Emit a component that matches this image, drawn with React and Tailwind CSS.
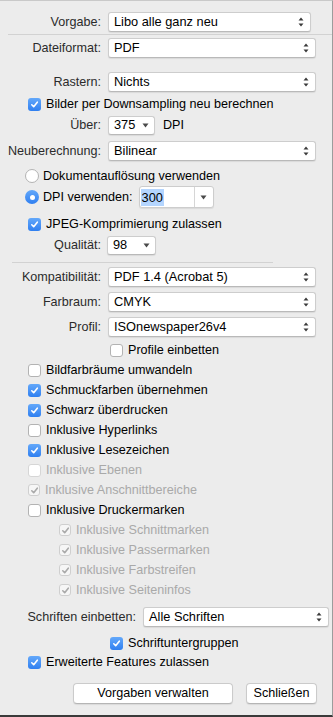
import React from "react";

const font = { fontFamily: '"Liberation Sans", Arial, sans-serif' };

function Check({ color = "white" }) {
  return (
    <svg width="9" height="9" viewBox="0 0 9 9" className="block">
      <path d="M1.8 4.8 L3.7 6.7 L7.3 2.2" fill="none" stroke={color} strokeWidth="1.6" strokeLinecap="round" strokeLinejoin="round" />
    </svg>
  );
}

function Checkbox({ checked, disabled }) {
  if (checked && !disabled) {
    return (
      <span className="w-[13px] h-[13px] shrink-0 rounded-[3px] bg-gradient-to-b from-[#63a8fa] to-[#2f7ff0] flex items-center justify-center">
        <Check />
      </span>
    );
  }
  if (checked && disabled) {
    return (
      <span className="w-[12px] h-[12px] shrink-0 rounded-[3px] bg-[#f6f6f6] border border-[#cfcfcf] flex items-center justify-center">
        <Check color="#a9a9a9" />
      </span>
    );
  }
  return (
    <span
      className={
        "w-[13px] h-[13px] shrink-0 rounded-[3px] bg-white border " +
        (disabled ? "border-[#d6d6d6]" : "border-[#b3b3b3]")
      }
    />
  );
}

function Radio({ on }) {
  if (on)
    return (
      <span className="w-[14px] h-[14px] shrink-0 rounded-full bg-gradient-to-b from-[#63a8fa] to-[#2f7ff0] flex items-center justify-center">
        <span className="w-[5px] h-[5px] rounded-full bg-white" />
      </span>
    );
  return <span className="w-[14px] h-[14px] shrink-0 rounded-full bg-white border border-[#b3b3b3]" />;
}

function Stepper() {
  return (
    <svg width="6" height="10" viewBox="0 0 6 10" className="block">
      <path d="M3 0.5 L5.5 3.5 L0.5 3.5 Z" fill="#3a3a3a" />
      <path d="M3 9.5 L5.5 6.5 L0.5 6.5 Z" fill="#3a3a3a" />
    </svg>
  );
}

function Down() {
  return (
    <svg width="7" height="5" viewBox="0 0 7 5" className="block">
      <path d="M0.5 0.5 L6.5 0.5 L3.5 4.5 Z" fill="#4a4a4a" />
    </svg>
  );
}

function Select({ text, w = "w-[208px]" }) {
  return (
    <div className={w + " h-[20px] bg-white border border-[#cdcdcd] border-b-[#b9b9b9] rounded-[3px] shadow-[0_1px_1px_rgba(0,0,0,0.08)] flex items-center pl-[5px] pr-[6px]"}>
      <span className="flex-1 text-[12.8px] text-black leading-none pt-[1px]">{text}</span>
      <Stepper />
    </div>
  );
}

function Pop({ text, w }) {
  return (
    <div className={w + " h-[19px] bg-white border border-[#cdcdcd] border-b-[#b9b9b9] rounded-[3px] shadow-[0_1px_1px_rgba(0,0,0,0.08)] flex items-center pl-[5px] pr-[5px]"}>
      <span className="flex-1 text-[12.8px] text-black leading-none pt-[1px]">{text}</span>
      <Down />
    </div>
  );
}

function LabelRow({ label, children, className = "" }) {
  return (
    <div className={"flex items-center " + className}>
      <div className="w-[101px] shrink-0 text-right text-[12.6px] text-[#2b2b2b] leading-none">{label}</div>
      <div className="ml-[7px] flex items-center">{children}</div>
    </div>
  );
}

function CheckRow({ label, checked, disabled, indent = "pl-[28px]" }) {
  return (
    <div className={"h-[20px] flex items-center gap-[5px] " + indent}>
      <Checkbox checked={checked} disabled={disabled} />
      <span className={"text-[12.6px] leading-none " + (disabled ? "text-[#a9a9a9]" : "text-black")}>{label}</span>
    </div>
  );
}

export default function App() {
  return (
    <div style={font} className="w-[333px] h-[717px] bg-[#ececec] border-t border-[#c9c9c9] border-r border-r-[#9c9c9c] border-b-2 border-b-[#3a3a3a] overflow-hidden flex flex-col">
      <LabelRow label="Vorgabe:" className="mt-[11px] h-[20px]">
        <Select text="Libo alle ganz neu" w="w-[203px]" />
      </LabelRow>
      <div className="mt-[2px] ml-[8px] h-px bg-[#d2d2d2]" />
      <LabelRow label="Dateiformat:" className="mt-[3px] h-[20px]">
        <Select text="PDF" />
      </LabelRow>
      <LabelRow label="Rastern:" className="mt-[14px] h-[20px]">
        <Select text="Nichts" />
      </LabelRow>
      <div className="mt-[2px]">
        <CheckRow label="Bilder per Downsampling neu berechnen" checked />
      </div>
      <LabelRow label="Über:" className="mt-[1px] h-[20px]">
        <Pop text="375" w="w-[47px]" />
        <span className="ml-[8px] text-[12.6px] text-black leading-none">DPI</span>
      </LabelRow>
      <LabelRow label="Neuberechnung:" className="mt-[6px] h-[20px]">
        <Select text="Bilinear" />
      </LabelRow>
      <div className="mt-[5px] h-[20px] flex items-center gap-[4px] pl-[25px]">
        <Radio />
        <span className="text-[12.6px] text-black leading-none">Dokumentauflösung verwenden</span>
      </div>
      <div className="h-[22px] flex items-center pl-[25px]">
        <Radio on />
        <span className="ml-[4px] text-[12.6px] text-black leading-none">DPI verwenden:</span>
        <div className="ml-[6px] w-[75px] h-[22px] bg-white border border-[#cdcdcd] rounded-[3px] shadow-[0_1px_1px_rgba(0,0,0,0.08)] flex items-stretch">
          <div className="flex-1 flex items-center pl-[1px]">
            <span className="bg-[#b4d5fe] text-[12.8px] text-black leading-[17px] px-[1px]">300</span>
          </div>
          <div className="w-[19px] border-l border-[#d6d6d6] flex items-center justify-center">
            <Down />
          </div>
        </div>
      </div>
      <div className="mt-[6px]">
        <CheckRow label="JPEG-Komprimierung zulassen" checked />
      </div>
      <LabelRow label="Qualität:" className="mt-[1px] h-[20px]">
        <div className="-ml-[1px]">
          <Pop text="98" w="w-[49px]" />
        </div>
      </LabelRow>
      <div className="mt-[7px] ml-[12px] w-[261px] h-px bg-[#d2d2d2]" />
      <LabelRow label="Kompatibilität:" className="mt-[4px] h-[20px]">
        <Select text="PDF 1.4 (Acrobat 5)" />
      </LabelRow>
      <LabelRow label="Farbraum:" className="mt-[5px] h-[20px]">
        <Select text="CMYK" />
      </LabelRow>
      <LabelRow label="Profil:" className="mt-[5px] h-[20px]">
        <Select text="ISOnewspaper26v4" />
      </LabelRow>
      <div className="mt-[3px]">
        <CheckRow label="Profile einbetten" indent="pl-[110px]" />
      </div>
      <CheckRow label="Bildfarbräume umwandeln" />
      <CheckRow label="Schmuckfarben übernehmen" checked />
      <CheckRow label="Schwarz überdrucken" checked />
      <CheckRow label="Inklusive Hyperlinks" />
      <CheckRow label="Inklusive Lesezeichen" checked />
      <CheckRow label="Inklusive Ebenen" disabled />
      <CheckRow label="Inklusive Anschnittbereiche" checked disabled />
      <CheckRow label="Inklusive Druckermarken" />
      <CheckRow label="Inklusive Schnittmarken" checked disabled indent="pl-[59px]" />
      <CheckRow label="Inklusive Passermarken" checked disabled indent="pl-[59px]" />
      <CheckRow label="Inklusive Farbstreifen" checked disabled indent="pl-[59px]" />
      <CheckRow label="Inklusive Seiteninfos" checked disabled indent="pl-[59px]" />
      <div className="mt-[7px] h-[20px] flex items-center">
        <div className="w-[136px] shrink-0 text-right text-[12.6px] text-[#2b2b2b] leading-none">Schriften einbetten:</div>
        <div className="ml-[7px]">
          <Select text="Alle Schriften" w="w-[186px]" />
        </div>
      </div>
      <div className="mt-[6px]">
        <CheckRow label="Schriftuntergruppen" checked indent="pl-[110px]" />
      </div>
      <div className="-mt-[1px]">
        <CheckRow label="Erweiterte Features zulassen" checked />
      </div>
      <div className="mt-[11px] flex items-center pl-[73px] gap-[13px]">
        <div className="w-[160px] h-[21px] bg-white border border-[#cbcbcb] border-b-[#b5b5b5] rounded-[4px] shadow-[0_1px_1px_rgba(0,0,0,0.08)] flex items-center justify-center text-[12.6px] text-black leading-none">
          Vorgaben verwalten
        </div>
        <div className="w-[71px] h-[21px] bg-white border border-[#cbcbcb] border-b-[#b5b5b5] rounded-[4px] shadow-[0_1px_1px_rgba(0,0,0,0.08)] flex items-center justify-center text-[12.6px] text-black leading-none">
          Schließen
        </div>
      </div>
    </div>
  );
}
